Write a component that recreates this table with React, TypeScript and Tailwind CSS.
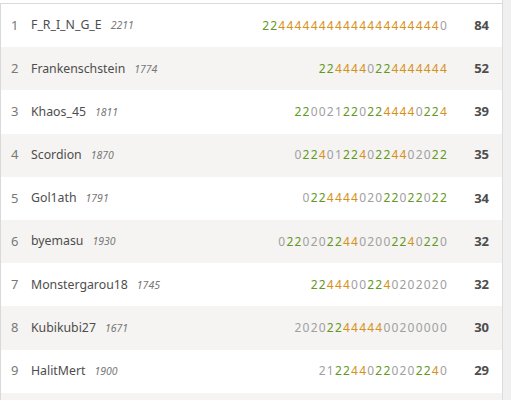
import React from "react";

type Player = { rank: number; name: string; rating: number; sheet: string; total: number };

const players: Player[] = [
  { rank: 1, name: "F_R_I_N_G_E", rating: 2211, sheet: "22444444444444444444440", total: 84 },
  { rank: 2, name: "Frankenschstein", rating: 1774, sheet: "2244440224444444", total: 52 },
  { rank: 3, name: "Khaos_45", rating: 1811, sheet: "2200212202244440224", total: 39 },
  { rank: 4, name: "Scordion", rating: 1870, sheet: "0224012240224402022", total: 35 },
  { rank: 5, name: "Gol1ath", rating: 1791, sheet: "022444402022022022", total: 34 },
  { rank: 6, name: "byemasu", rating: 1930, sheet: "022020224402002240220", total: 32 },
  { rank: 7, name: "Monstergarou18", rating: 1745, sheet: "22444002240202020", total: 32 },
  { rank: 8, name: "Kubikubi27", rating: 1671, sheet: "2020224444400200000", total: 30 },
  { rank: 9, name: "HalitMert", rating: 1900, sheet: "2122440220202240", total: 29 },
  { rank: 10, name: "", rating: 0, sheet: "", total: 0 },
];

// a 2 is green only when it sits in a run of wins, 4 is always a doubled score
function digitClass(s: string, i: number) {
  const d = s[i];
  if (d === "4") return "text-[#d59120]";
  if (d === "2") {
    const win = (c?: string) => c === "2" || c === "4";
    if (win(s[i - 1]) || win(s[i + 1])) return "text-[#629924]";
  }
  return "text-[#a0a0a0]";
}

function Sheet({ s }: { s: string }) {
  return (
    <div className="text-[12px] tracking-[0.1em] whitespace-nowrap">
      {s.split("").map((d, i) => (
        <span key={i} className={digitClass(s, i)}>
          {d}
        </span>
      ))}
    </div>
  );
}

export default function App() {
  return (
    <div
      className="w-[511px] h-[400px] overflow-hidden bg-white flex"
      style={{ fontFamily: '"Noto Sans", sans-serif' }}
    >
      <div className="w-[502px] flex flex-col">
        <div className="h-[3px] bg-white shrink-0" />
        <div className="border-t border-l border-[#d9d9d9] flex flex-col">
          {players.map((p, idx) => (
            <div
              key={p.rank}
              className={`h-[43.2px] shrink-0 flex items-center ${idx % 2 === 1 ? "bg-[#f5f4f2]" : "bg-white"}`}
            >
              {p.name && (
                <>
                  <div className="w-[30px] pl-[10px] text-[13px] text-[#787878]">{p.rank}</div>
                  <div className="flex-1 flex items-baseline gap-[9px]">
                    <span className="text-[12.3px] text-[#4d4d4d]">{p.name}</span>
                    <span className="text-[10.5px] italic text-[#787878]">{p.rating}</span>
                  </div>
                  <Sheet s={p.sheet} />
                  <div className="w-[54px] pr-[13px] text-right text-[13px] font-bold text-[#4d4d4d]">
                    {p.total}
                  </div>
                </>
              )}
            </div>
          ))}
        </div>
      </div>
      <div className="flex-1 bg-[#f0f0f0] border-l border-[#dcdcdc]" />
    </div>
  );
}
